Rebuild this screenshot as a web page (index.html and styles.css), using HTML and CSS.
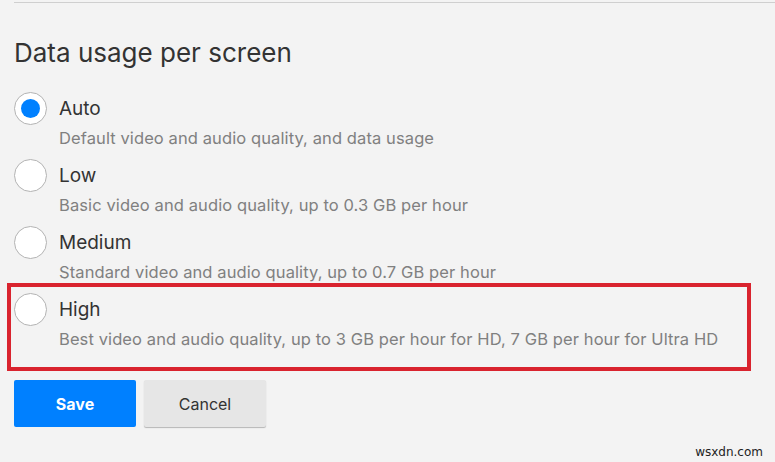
FILE: index.html
```html
<!DOCTYPE html>
<html lang="en">
<head>
<meta charset="utf-8">
<title>Data usage per screen</title>
<link rel="stylesheet" href="styles.css">
</head>
<body>
<div class="page">
  <div class="rule"></div>
  <h2 class="title">Data usage per screen</h2>
  <div class="options">
    <div class="option">
      <span class="radio checked"></span>
      <div class="text">
        <div class="label">Auto</div>
        <div class="desc">Default video and audio quality, and data usage</div>
      </div>
    </div>
    <div class="option">
      <span class="radio"></span>
      <div class="text">
        <div class="label">Low</div>
        <div class="desc">Basic video and audio quality, up to 0.3 GB per hour</div>
      </div>
    </div>
    <div class="option">
      <span class="radio"></span>
      <div class="text">
        <div class="label">Medium</div>
        <div class="desc">Standard video and audio quality, up to 0.7 GB per hour</div>
      </div>
    </div>
    <div class="option highlighted">
      <span class="radio"></span>
      <div class="text">
        <div class="label">High</div>
        <div class="desc">Best video and audio quality, up to 3 GB per hour for HD, 7 GB per hour for Ultra HD</div>
      </div>
      <span class="mark"></span>
    </div>
  </div>
  <div class="actions">
    <button class="btn primary">Save</button>
    <button class="btn secondary">Cancel</button>
  </div>
</div>
<div class="watermark">wsxdn.com</div>
</body>
</html>
```
FILE: styles.css
```css
html, body {
  margin: 0;
  padding: 0;
  background: #f3f3f3;
  height: 100%;
}
body {
  font-family: Inter, "Noto Sans", "Liberation Sans", sans-serif;
  color: #333;
  position: relative;
  overflow: hidden;
}
.page {
  padding: 2px 0 0 14px;
}
.rule {
  border-top: 1px solid #cfcfcf;
}
.title {
  margin: 33px 0 22px;
  font-size: 26px;
  line-height: 34px;
  font-weight: 400;
  color: #333;
  letter-spacing: 0;
}
.options {
  display: flex;
  flex-direction: column;
  gap: 8px;
}
.option {
  display: flex;
  gap: 12px;
  position: relative;
}
.radio {
  flex: none;
  width: 31px;
  height: 31px;
  border: 1px solid #b3b3b3;
  border-radius: 50%;
  background: #fff;
  position: relative;
}
.radio.checked::after {
  content: "";
  position: absolute;
  left: 6px;
  top: 6px;
  width: 19px;
  height: 19px;
  border-radius: 50%;
  background: #0080ff;
}
.label {
  font-size: 19px;
  line-height: 33px;
  color: #333;
}
.desc {
  font-size: 16.5px;
  letter-spacing: 0.1px;
  line-height: 26px;
  color: #808080;
}
.mark {
  position: absolute;
  left: -7px;
  top: -10px;
  width: 736px;
  height: 80px;
  border: 4px solid #d9232e;
  pointer-events: none;
}
.actions {
  display: flex;
  gap: 8px;
  margin-top: 28px;
}
.btn {
  width: 122px;
  height: 47px;
  border: 0;
  border-radius: 2px;
  font-family: inherit;
  font-size: 16px;
  cursor: pointer;
}
.primary {
  background: #0080ff;
  color: #fff;
  font-weight: 700;
}
.secondary {
  background: #e6e6e6;
  color: #333;
  box-shadow: 0 1px 1px rgba(0,0,0,0.25);
}
.watermark {
  position: absolute;
  right: 12px;
  bottom: 3px;
  font-family: "DejaVu Sans", sans-serif;
  font-size: 12px;
  color: #222;
}
```
